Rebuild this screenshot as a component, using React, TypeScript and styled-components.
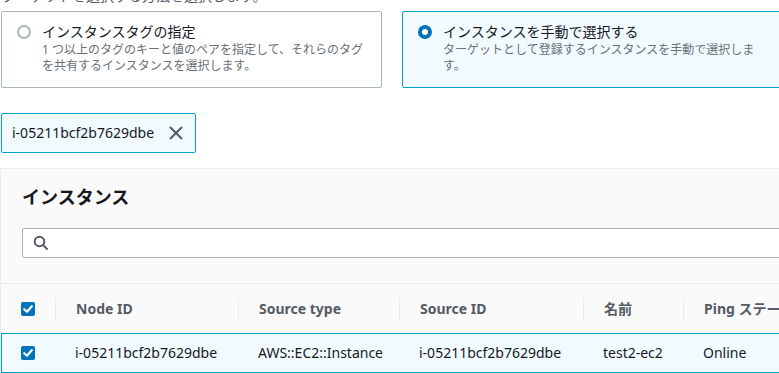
import styled, { createGlobalStyle } from "styled-components"

const GlobalStyle = createGlobalStyle`
  html, body {
    margin: 0;
    padding: 0;
    background: #ffffff;
    overflow: hidden;
  }
  body {
    font-family: "Noto Sans", "Noto Sans CJK JP", sans-serif;
    color: #16191f;
  }
`

type Column = { key: string; label: string; width: number }

const columns: Column[] = [
  { key: "nodeId", label: "Node ID", width: 183 },
  { key: "sourceType", label: "Source type", width: 161 },
  { key: "sourceId", label: "Source ID", width: 184 },
  { key: "name", label: "名前", width: 100 },
  { key: "ping", label: "Ping ステータス", width: 220 },
]

const rows = [
  {
    nodeId: "i-05211bcf2b7629dbe",
    sourceType: "AWS::EC2::Instance",
    sourceId: "i-05211bcf2b7629dbe",
    name: "test2-ec2",
    ping: "Online",
  },
]

// first column is the checkbox; selected rows have a 1px border so they lose a pixel there
const gridTemplate = (first: number) => `${first}px ${columns.map((c) => `${c.width}px`).join(" ")}`

const CheckIcon = () => (
  <svg width="14" height="14" viewBox="0 0 14 14">
    <rect x="0" y="0" width="14" height="14" rx="2" fill="#0073bb" />
    <path d="M3.2 7.2 L6 9.8 L10.8 4.2" fill="none" stroke="#ffffff" strokeWidth="2.2" strokeLinecap="round" strokeLinejoin="round" />
  </svg>
)

const CloseIcon = () => (
  <svg width="16" height="16" viewBox="0 0 16 16">
    <path d="M2 2 L14 14 M14 2 L2 14" fill="none" stroke="#545b64" strokeWidth="2" />
  </svg>
)

const SearchIcon = () => (
  <svg width="16" height="16" viewBox="0 0 16 16">
    <circle cx="6.5" cy="6.5" r="4.8" fill="none" stroke="#545b64" strokeWidth="2" />
    <path d="M10 10 L14 14" fill="none" stroke="#545b64" strokeWidth="2" strokeLinecap="round" />
  </svg>
)

export default function App() {
  return (
    <Root>
      <GlobalStyle />
      <Intro>ターゲットを選択する方法を選択します。</Intro>
      <Tiles>
        <Tile>
          <Radio />
          <TileBody>
            <TileLabel>インスタンスタグの指定</TileLabel>
            <TileDesc>1 つ以上のタグのキーと値のペアを指定して、それらのタグを共有するインスタンスを選択します。</TileDesc>
          </TileBody>
        </Tile>
        <Tile $selected>
          <Radio $checked />
          <TileBody>
            <TileLabel>インスタンスを手動で選択する</TileLabel>
            <TileDesc>ターゲットとして登録するインスタンスを手動で選択します。</TileDesc>
          </TileBody>
        </Tile>
      </Tiles>
      <Token>
        <TokenText>i-05211bcf2b7629dbe</TokenText>
        <TokenDismiss>
          <CloseIcon />
        </TokenDismiss>
      </Token>
      <Container>
        <ContainerHeader>
          <Title>インスタンス</Title>
          <SearchBox>
            <SearchIcon />
          </SearchBox>
        </ContainerHeader>
        <HeadRow>
          <CheckCell>
            <CheckIcon />
          </CheckCell>
          {columns.map((c) => (
            <HeadCell key={c.key}>{c.label}</HeadCell>
          ))}
        </HeadRow>
        {rows.map((r) => (
          <DataRow key={r.nodeId}>
            <CheckCell $inset>
              <CheckIcon />
            </CheckCell>
            {columns.map((c) => (
              <DataCell key={c.key}>{r[c.key as keyof typeof r]}</DataCell>
            ))}
          </DataRow>
        ))}
      </Container>
    </Root>
  )
}

const Root = styled.div`
  width: 920px;
  display: flex;
  flex-direction: column;
  align-items: flex-start;
`

const Intro = styled.div`
  margin: -14px 0 5px 2px;
  font-size: 14px;
  line-height: 20px;
  color: #545b64;
`

const Tiles = styled.div`
  display: grid;
  grid-template-columns: 381px 380px;
  gap: 20px;
  margin-left: 1px;
`

const Tile = styled.div<{ $selected?: boolean }>`
  box-sizing: border-box;
  height: 77px;
  display: flex;
  align-items: flex-start;
  gap: 11px;
  padding: 10px 10px 0 15px;
  border: 1px solid ${(p) => (p.$selected ? "#00a1c9" : "#aab7b8")};
  border-radius: 2px;
  background: ${(p) => (p.$selected ? "#f1faff" : "#ffffff")};
`

const Radio = styled.span<{ $checked?: boolean }>`
  box-sizing: border-box;
  flex: none;
  width: 14px;
  height: 14px;
  margin-top: 3px;
  border-radius: 50%;
  background: #ffffff;
  border: ${(p) => (p.$checked ? "4px solid #0073bb" : "2px solid #aab7b8")};
`

const TileBody = styled.div`
  display: flex;
  flex-direction: column;
  width: 328px;
`

const TileLabel = styled.div`
  font-size: 14px;
  line-height: 20px;
  color: #16191f;
`

const TileDesc = styled.div`
  font-size: 12px;
  line-height: 16px;
  color: #687078;
`

const Token = styled.div`
  box-sizing: border-box;
  margin: 25px 0 0 1px;
  width: 195px;
  height: 40px;
  display: flex;
  align-items: center;
  justify-content: space-between;
  padding: 0 11px 0 10px;
  background: #f1faff;
  border: 1px solid #00a1c9;
  border-radius: 2px;
`

const TokenText = styled.span`
  font-size: 14px;
  line-height: 20px;
  color: #16191f;
`

const TokenDismiss = styled.span`
  display: flex;
  align-items: center;
`

const Container = styled.div`
  margin-top: 15px;
  width: 100%;
  background: #fafafa;
  border-top: 1px solid #eaeded;
  border-left: 1px solid #eaeded;
`

const ContainerHeader = styled.div`
  padding: 16px 0 25px 21px;
  border-bottom: 1px solid #eaeded;
  display: flex;
  flex-direction: column;
  gap: 19px;
`

const Title = styled.h2`
  margin: 0;
  font-size: 18px;
  line-height: 24px;
  font-weight: 700;
  color: #16191f;
`

const SearchBox = styled.div`
  box-sizing: border-box;
  height: 30px;
  display: flex;
  align-items: center;
  padding-left: 10px;
  background: #ffffff;
  border: 1px solid #aab7b8;
  border-radius: 2px;
`

const HeadRow = styled.div`
  display: grid;
  grid-template-columns: ${gridTemplate(54)};
  height: 49px;
  align-items: center;
`

const DataRow = styled.div`
  display: grid;
  grid-template-columns: ${gridTemplate(53)};
  box-sizing: border-box;
  height: 40px;
  align-items: center;
  background: #f1faff;
  border: 1px solid #00a1c9;
`

const CheckCell = styled.div<{ $inset?: boolean }>`
  display: flex;
  align-items: center;
  padding-left: ${(p) => (p.$inset ? 19 : 20)}px;
`

const HeadCell = styled.div`
  padding-left: 20px;
  border-left: 1px solid #eaeded;
  font-size: 14px;
  line-height: 22px;
  font-weight: 700;
  color: #545b64;
  white-space: nowrap;
`

const DataCell = styled.div`
  padding-left: 20px;
  font-size: 14px;
  line-height: 20px;
  color: #16191f;
  white-space: nowrap;
`
